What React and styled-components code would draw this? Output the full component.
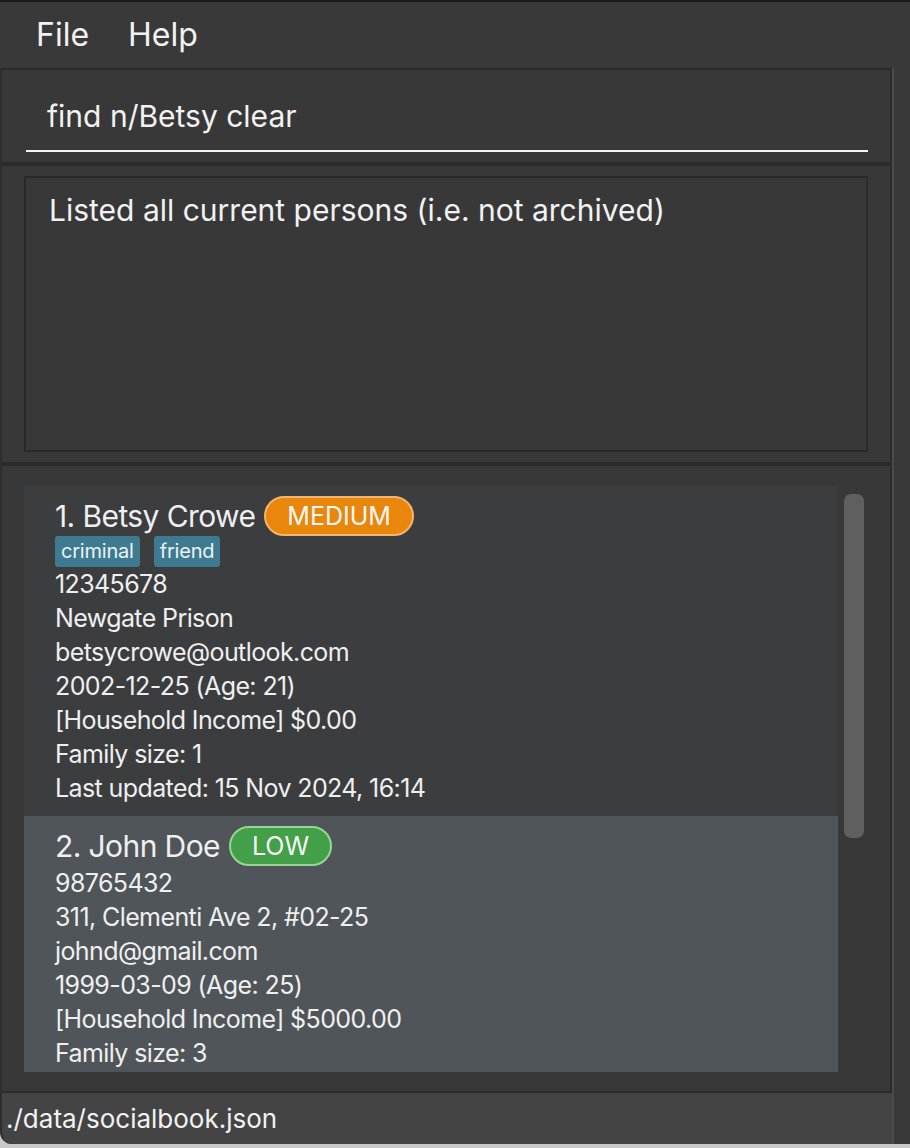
import React from "react";
import styled, { createGlobalStyle } from "styled-components";

const Global = createGlobalStyle`
  html, body { margin: 0; padding: 0; background: #ffffff; }
  body { font-family: Inter, "Noto Sans", "Liberation Sans", sans-serif; -webkit-font-smoothing: antialiased; }
  * { box-sizing: border-box; }
`;

const Frame = styled.div`
  width: 910px;
  height: 1148px;
  display: flex;
  flex-direction: column;
  background: #c9c9c9;
  overflow: hidden;
`;

const TopEdge = styled.div`
  height: 2px;
  background: #1b1b1b;
`;

const MenuBar = styled.div`
  height: 66px;
  background: #393939;
  display: flex;
  align-items: center;
  gap: 39px;
  padding-left: 36px;
  color: #f2f2f2;
  font-size: 32px;
`;

const MenuItem = styled.span`
  line-height: 1;
`;

const Body = styled.div`
  display: flex;
  height: 1076px;
`;

const Main = styled.div`
  width: 892px;
  display: flex;
  flex-direction: column;
  background: #383838;
  border-left: 2px solid #2e2e2e;
  border-bottom-left-radius: 12px;
  overflow: hidden;
`;

const Side = styled.div`
  width: 18px;
  background: #393939;
  border-left: 2px solid #4a4a4a;
`;

const Edge = styled.div`
  flex: 1;
  background: #ffffff;
`;

const Panel = styled.div`
  border-right: 2px solid #2b2b2b;
  border-top: ${(p) => p.$top}px solid #2b2b2b;
  padding: ${(p) => p.$pad};
  height: ${(p) => p.$h}px;
  width: 890px;
  position: relative;
`;

const CommandInput = styled.div`
  width: 842px;
  height: 70px;
  border-bottom: 2px solid #f5f5f5;
  display: flex;
  align-items: center;
  padding-left: 21px;
  color: #f2f2f2;
  font-size: 30px;
`;

const ResultBox = styled.div`
  width: 844px;
  height: 276px;
  border: 2px solid #2a2a2a;
  padding: 14px 23px;
  color: #f2f2f2;
  font-size: 30px;
  line-height: 36px;
`;

const ListViewport = styled.div`
  width: 814px;
  height: 586px;
  overflow: hidden;
  display: flex;
  flex-direction: column;
`;

const Card = styled.div`
  background: ${(p) => (p.$odd ? "#4f5558" : "#3c3d3f")};
  padding: 10px 20px 11px 31px;
  flex-shrink: 0;
  color: #efefef;
`;

const NameRow = styled.div`
  height: 40px;
  display: flex;
  align-items: center;
  gap: 9px;
`;

const Name = styled.span`
  font-size: 30px;
  line-height: 1;
  letter-spacing: -0.6px;
`;

const Badge = styled.span`
  height: 40px;
  padding: 0 21px;
  border-radius: 20px;
  display: inline-flex;
  align-items: center;
  font-size: 25px;
  color: #f7f7f7;
  background: ${(p) => p.$bg};
  border: 2px solid ${(p) => p.$border};
`;

const TagRow = styled.div`
  height: 31px;
  display: flex;
  gap: 14px;
`;

const Tag = styled.span`
  height: 31px;
  padding: 0 6px;
  border-radius: 3px;
  background: #3e7b91;
  color: #eef3f5;
  font-size: 20px;
  letter-spacing: -0.2px;
  line-height: 31px;
`;

const Line = styled.div`
  font-size: 25px;
  line-height: 34px;
  height: 34px;
  letter-spacing: -0.6px;
  white-space: nowrap;
`;

const ScrollThumb = styled.div`
  position: absolute;
  left: 842px;
  top: 28px;
  width: 20px;
  height: 344px;
  border-radius: 7px;
  background: #5f5f5f;
`;

const StatusBar = styled.div`
  height: 53px;
  background: #444444;
  border-top: 2px solid #2b2b2b;
  border-right: 2px solid #4a4a4a;
  width: 892px;
  display: flex;
  align-items: center;
  padding-left: 4px;
  color: #f2f2f2;
  font-size: 26px;
`;

const persons = [
  {
    name: "1. Betsy Crowe",
    priority: "MEDIUM",
    tags: ["criminal", "friend"],
    lines: [
      "12345678",
      "Newgate Prison",
      "betsycrowe@outlook.com",
      "2002-12-25 (Age: 21)",
      "[Household Income] $0.00",
      "Family size: 1",
      "Last updated: 15 Nov 2024, 16:14",
    ],
  },
  {
    name: "2. John Doe",
    priority: "LOW",
    tags: [],
    lines: [
      "98765432",
      "311, Clementi Ave 2, #02-25",
      "johnd@gmail.com",
      "1999-03-09 (Age: 25)",
      "[Household Income] $5000.00",
      "Family size: 3",
    ],
  },
];

const badgeColors = {
  MEDIUM: { bg: "#e8870b", border: "#f2b56b" },
  LOW: { bg: "#43a048", border: "#96d596" },
  HIGH: { bg: "#d9352f", border: "#f09a96" },
};

export default function App() {
  return (
    <>
      <Global />
      <Frame>
        <TopEdge />
        <MenuBar>
          <MenuItem>File</MenuItem>
          <MenuItem>Help</MenuItem>
        </MenuBar>
        <Body>
          <Main>
            <Panel $top={2} $h={94} $pad="12px 0 0 24px">
              <CommandInput>find n/Betsy clear</CommandInput>
            </Panel>
            <Panel $top={4} $h={300} $pad="10px 0 0 22px">
              <ResultBox>Listed all current persons (i.e. not archived)</ResultBox>
            </Panel>
            <Panel $top={4} $h={629} $pad="20px 0 0 22px">
              <ListViewport>
                {persons.map((p, i) => (
                  <Card key={p.name} $odd={i % 2 === 1}>
                    <NameRow>
                      <Name>{p.name}</Name>
                      <Badge $bg={badgeColors[p.priority].bg} $border={badgeColors[p.priority].border}>
                        {p.priority}
                      </Badge>
                    </NameRow>
                    {p.tags.length > 0 && (
                      <TagRow>
                        {p.tags.map((t) => (
                          <Tag key={t}>{t}</Tag>
                        ))}
                      </TagRow>
                    )}
                    {p.lines.map((l) => (
                      <Line key={l}>{l}</Line>
                    ))}
                  </Card>
                ))}
              </ListViewport>
              <ScrollThumb />
            </Panel>
            <StatusBar>./data/socialbook.json</StatusBar>
          </Main>
          <Side />
          <Edge />
        </Body>
      </Frame>
    </>
  );
}
